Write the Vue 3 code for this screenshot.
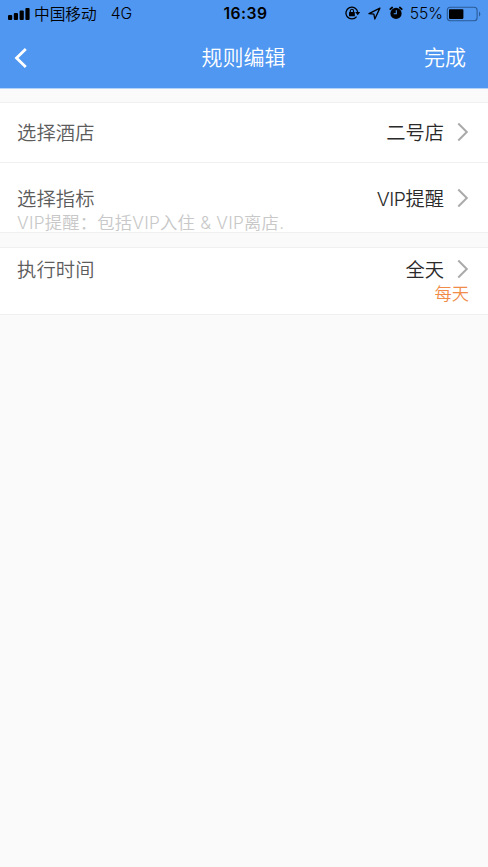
<script setup>
const bars = [5, 7, 9.5, 12]
</script>

<template>
  <div class="screen">
    <header class="top">
      <div class="status">
        <div class="side left">
          <svg class="signal" width="22" height="14" viewBox="0 0 22 14">
            <rect v-for="(h, i) in bars" :key="i" :x="i * 5.8" :y="13 - h" width="4.2" :height="h" rx="1" />
          </svg>
          <span class="carrier">中国移动</span>
          <span class="network">4G</span>
        </div>
        <div class="clock">16:39</div>
        <div class="side right">
          <svg class="lock" width="16" height="14" viewBox="0 0 16 14" fill="none" stroke="#000">
            <path d="M11.6 10.6A5.9 5.9 0 1 1 12.7 6" stroke-width="1.3" />
            <path d="M10.2 6.1h5l-2.5 3.1z" fill="#000" stroke="none" />
            <rect x="4" y="6.1" width="5.8" height="4.2" rx=".5" fill="#000" stroke="none" />
            <path d="M5.3 6.2V4.9a1.6 1.6 0 0 1 3.2 0v1.3" stroke-width="1.1" />
          </svg>
          <svg class="arrow" width="13" height="13" viewBox="0 0 13 13" fill="none" stroke="#000" stroke-width="1.3" stroke-linejoin="round">
            <path d="M11.9 1.1L1 6.6l4.9.6.9 4.8z" />
          </svg>
          <svg class="alarm" width="14" height="14" viewBox="0 0 14 14">
            <circle cx="7" cy="7.4" r="5.6" />
            <path d="M1.3 3.2l1.9-1.7M12.7 3.2l-1.9-1.7" stroke="#000" stroke-width="1.8" fill="none" stroke-linecap="round" />
            <path d="M7.3 4.2v3.6H4.7" stroke="#5097f1" stroke-width="1.1" fill="none" />
          </svg>
          <span class="percent">55%</span>
          <svg class="battery" width="35" height="16" viewBox="0 0 35 16">
            <rect x="1.3" y="1.3" width="29.8" height="13.4" rx="3" fill="none" stroke="#2b5b98" stroke-width="1.1" />
            <rect x="3" y="3.2" width="14.4" height="9.7" rx=".8" />
            <path d="M33 5.6q2.8 2.4 0 4.8z" fill="#2b5b98" />
          </svg>
        </div>
      </div>
      <nav class="nav">
        <svg class="back" width="14" height="22" viewBox="0 0 14 22">
          <path d="M11.8 1.9L2.5 11l9.3 9.1" fill="none" stroke="#fff" stroke-width="2.8" />
        </svg>
        <h1 class="title">规则编辑</h1>
        <span class="done">完成</span>
      </nav>
    </header>

    <main class="list">
      <section class="row hotel">
        <div class="line">
          <span class="label">选择酒店</span>
          <span class="value">二号店</span>
          <svg class="chevron" width="12" height="20" viewBox="0 0 12 20"><path d="M1.3 1.5L9.8 10l-8.5 8.5" /></svg>
        </div>
      </section>
      <section class="row metric">
        <div class="line">
          <span class="label">选择指标</span>
          <span class="value"><span class="latin">VIP</span>提醒</span>
          <svg class="chevron" width="12" height="20" viewBox="0 0 12 20"><path d="M1.3 1.5L9.8 10l-8.5 8.5" /></svg>
        </div>
        <div class="hint">VIP提醒：包括VIP入住 &amp; VIP离店.</div>
      </section>
      <section class="row time">
        <div class="line">
          <span class="label">执行时间</span>
          <span class="value">全天</span>
          <svg class="chevron" width="12" height="20" viewBox="0 0 12 20"><path d="M1.3 1.5L9.8 10l-8.5 8.5" /></svg>
        </div>
        <div class="repeat">每天</div>
      </section>
    </main>
  </div>
</template>

<style>
body {
  background: #fafafa;
}
</style>

<style scoped>
.screen {
  min-height: 867px;
  background: #fafafa;
  font-family: Inter, "Noto Sans CJK SC", sans-serif;
  font-weight: 350;
  white-space: nowrap;
}
.top {
  box-sizing: border-box;
  height: 89px;
  background: #5097f1;
  border-bottom: 1px solid #b5d2f8;
}
.status {
  display: grid;
  grid-template-columns: 1fr auto 1fr;
  align-items: center;
  height: 27px;
  padding: 0 7px 0 8px;
  color: #000;
  font-size: 15.7px;
  line-height: 27px;
}
.side {
  display: flex;
  align-items: center;
  height: 27px;
}
.carrier {
  margin-left: 4px;
  padding-top: 1px;
}
.network {
  margin-left: 14px;
}
.clock {
  padding-left: 2px;
  font-weight: 600;
  letter-spacing: 0.45px;
}
.right {
  justify-content: flex-end;
}
.arrow {
  margin-left: 7px;
}
.alarm {
  margin-left: 8px;
}
.alarm,
.arrow,
.lock {
  margin-bottom: 1px;
}
.percent {
  margin-left: 7px;
}
.battery {
  flex: none;
  margin-left: 3px;
}
.nav {
  display: grid;
  grid-template-columns: 1fr auto 1fr;
  align-items: center;
  height: 61px;
  padding: 0 22px 0 14px;
  color: #fff;
  font-size: 21px;
}
.title {
  margin: 0;
  padding: 0 0 4px 7px;
  font-size: 21px;
  font-weight: 350;
}
.done {
  justify-self: end;
  padding-bottom: 4px;
}
.list {
  padding-top: 13px;
}
.row {
  box-sizing: border-box;
  padding: 0 19px 0 17px;
  background: #fff;
  border-top: 1px solid #f0f0f0;
  border-bottom: 1px solid #f0f0f0;
}
.hotel {
  height: 61px;
  padding-top: 14px;
}
.metric {
  height: 70px;
  padding-top: 20px;
  border-top: 0;
}
.time {
  height: 68px;
  margin-top: 14px;
  padding-top: 6px;
}
.line {
  display: flex;
  align-items: center;
  height: 29px;
  font-size: 19.3px;
}
.label {
  color: #5c5c5c;
  letter-spacing: 0.1px;
}
.value {
  margin-left: auto;
  color: #2a2a2a;
}
.latin {
  letter-spacing: -0.5px;
}
.chevron {
  margin-left: 13px;
  fill: none;
  stroke: #aaa;
  stroke-width: 2;
}
.hint,
.repeat {
  height: 20px;
  font-size: 17.3px;
  line-height: 20px;
}
.hint {
  padding-top: 1px;
  color: #c8c8c8;
  letter-spacing: 0.24px;
}
.repeat {
  padding-top: 1px;
  color: #f08c48;
  text-align: right;
}
</style>
